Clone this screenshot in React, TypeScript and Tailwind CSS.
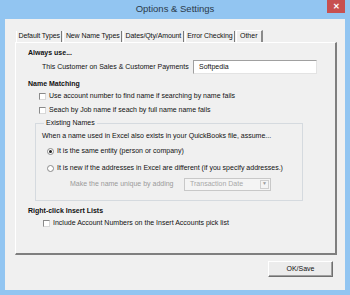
const FONT = "font-['Liberation_Sans',Arial,sans-serif]";

const TABS = ["Default Types", "New Name Types", "Dates/Qty/Amount", "Error Checking"];

function Check({ label, className = "" }: { label: string; className?: string }) {
  return (
    <div className={`flex h-[12px] items-center gap-[3px] ${className}`}>
      <span className="h-[7px] w-[7px] border border-t-[#8a8a8a] border-l-[#8a8a8a] border-r-[#d8d8d8] border-b-[#d8d8d8] bg-white" />
      <span className="whitespace-nowrap">{label}</span>
    </div>
  );
}

function Radio({ label, checked }: { label: string; checked?: boolean }) {
  return (
    <div className="flex h-[12px] items-center gap-[3px]">
      <span className="flex h-[7px] w-[7px] items-center justify-center rounded-full border border-[#8a8a8a] bg-white">
        {checked && <span className="h-[3px] w-[3px] rounded-full bg-[#222]" />}
      </span>
      <span className="whitespace-nowrap">{label}</span>
    </div>
  );
}

export default function App() {
  return (
    <div className={`flex h-[295px] w-[350px] flex-col bg-[#92c5f1] text-[7px] text-[#111] ${FONT}`}>
      {/* title bar */}
      <div className="relative flex h-[19px] items-center justify-center text-[9.5px] text-[#2b3a4a]">
        Options &amp; Settings
        <div className="absolute right-[5px] top-0 flex h-[13px] w-[18px] items-center justify-center bg-[#c75050] text-[8px] font-bold text-white">
          ✕
        </div>
      </div>

      <div className="mx-[5px] mb-[5px] flex flex-1 flex-col bg-[#f0f0f0] pl-[10px] pr-[8px] pt-[11px]">
        {/* tabs */}
        <div className="flex h-[12px] items-end pl-[1px]">
          {TABS.map((t) => (
            <div
              key={t}
              className="mr-[1px] flex h-[11px] items-center whitespace-nowrap border-l border-r border-l-white border-r-[#7a7a7a] px-[1.5px] tracking-[-0.1px]"
            >
              {t}
            </div>
          ))}
          <div className="flex h-[12px] items-center border-l border-r-2 border-t border-l-white border-t-white border-r-[#8a8a8a] bg-[#f0f0f0] px-[3px]">
            Other
          </div>
        </div>

        {/* panel */}
        <div className="flex h-[213px] flex-col border border-b-2 border-r-2 border-l-white border-t-white border-b-[#7f7f7f] border-r-[#7f7f7f] pl-[12px] pt-[4px]">
          <div className="flex h-[12px] items-center font-bold">Always use...</div>
          <div className="mt-[1px] flex h-[14px] items-center pl-[14px]">
            <span className="w-[151px] whitespace-nowrap">This Customer on Sales &amp; Customer Payments</span>
            <div className="flex h-[14px] w-[124px] items-center border border-b-[#e3e3e3] border-l-[#a0a0a0] border-r-[#e3e3e3] border-t-[#a0a0a0] bg-white pl-[5px]">
              Softpedia
            </div>
          </div>
          <div className="mt-[4px] flex h-[12px] items-center font-bold">Name Matching</div>
          <Check className="ml-[11px]" label="Use account number to find name if searching by name fails" />
          <Check className="ml-[11px] mt-[2px]" label="Seach by Job name if seach by full name name fails" />

          <fieldset className="ml-[7px] mt-[1px] h-[84px] w-[268px] border border-[#d5dadf] pl-[6px]">
            <legend className="ml-[2px] px-[2px] leading-[12px]">Existing Names</legend>
            <div className="mt-[1px] flex h-[12px] items-center whitespace-nowrap">
              When a name used in Excel also exists in your QuickBooks file, assume...
            </div>
            <div className="mt-[3px] pl-[5px]">
              <Radio checked label="It is the same entity (person or company)" />
            </div>
            <div className="mt-[5px] pl-[5px]">
              <Radio label="It is new if the addresses in Excel are different (if you specify addresses.)" />
            </div>
            <div className="mt-[3px] flex h-[14px] items-center pl-[28px] text-[#9a9a9a]">
              <span className="w-[114px] whitespace-nowrap">Make the name unique by adding</span>
              <div className="flex h-[13px] w-[87px] items-center justify-between border border-[#c8c8c8] bg-[#f4f4f4] pl-[5px]">
                <span className="text-[#a8a8a8]">Transaction Date</span>
                <span className="mr-[1px] flex h-[9px] w-[9px] items-center justify-center border border-[#cfcfcf] text-[5px] text-[#9a9a9a]">
                  ▼
                </span>
              </div>
            </div>
          </fieldset>

          <div className="mt-[4px] flex h-[12px] items-center font-bold">Right-click Insert Lists</div>
          <Check className="ml-[15px]" label="Include Account Numbers on the Insert Accounts pick list" />
        </div>

        {/* footer */}
        <div className="flex flex-1 items-start justify-end pr-[4px] pt-[6px]">
          <div className="flex h-[16px] w-[65px] items-center justify-center border border-b-[#6f6f6f] border-l-white border-r-[#6f6f6f] border-t-white bg-[#ececec] shadow-[inset_-1px_-1px_0_#a0a0a0]">
            OK/Save
          </div>
        </div>
      </div>
    </div>
  );
}
